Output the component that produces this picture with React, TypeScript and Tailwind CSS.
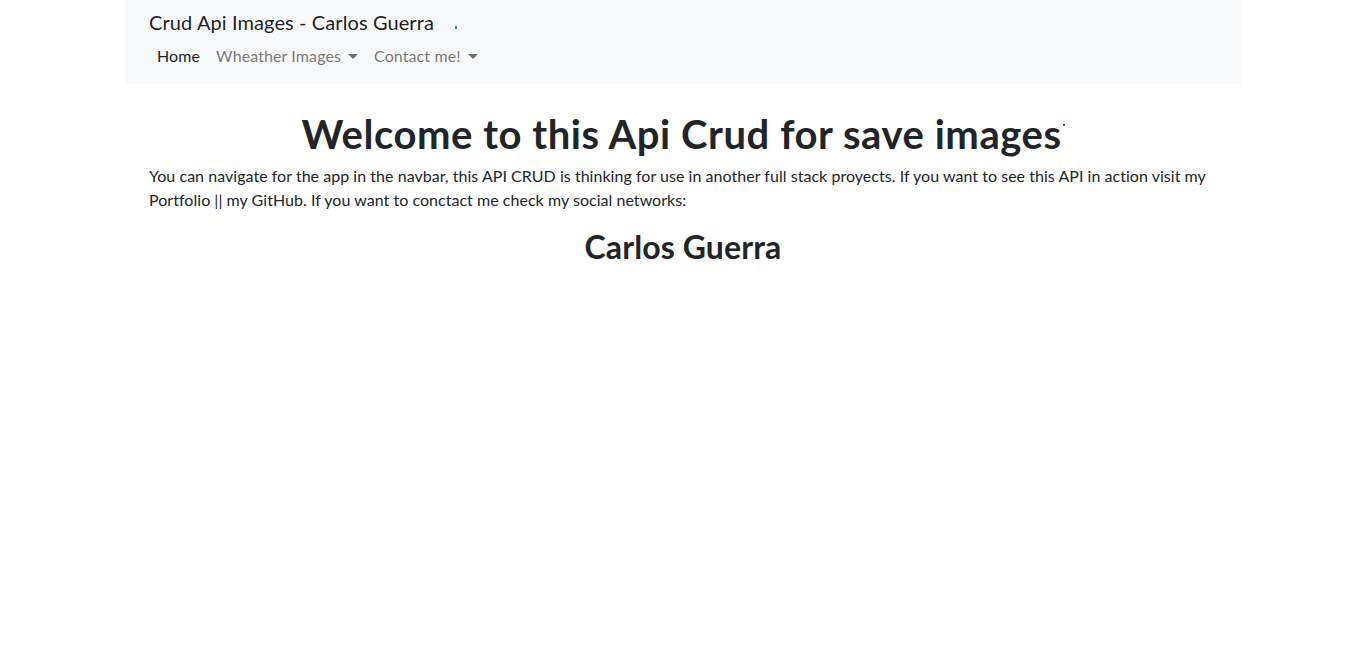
import React from "react";

export default function App() {
  return (
    <div className="min-h-screen bg-white text-[#212529]" style={{ fontFamily: "Lato, 'Noto Sans', sans-serif" }}>
      <div className="mx-auto w-[1116px]">
        <nav className="bg-[#f8f9fa] px-6 pb-2">
          <div className="flex items-start pt-[7px] h-[36px]">
            <span className="text-[20px] leading-[30px] tracking-[0.1px] text-[rgba(0,0,0,0.9)]">Crud Api Images - Carlos Guerra</span>
            <span className="ml-[21px] mt-[19px] w-[2px] h-[3px] bg-[#3b7fd0]"></span>
          </div>
          <ul className="flex h-[40px] items-center text-[16px] leading-6 tracking-[0.1px]">
            <li className="px-2 py-2 text-[rgba(0,0,0,0.9)]">Home</li>
            <li className="px-2 py-2 text-[rgba(0,0,0,0.55)] flex items-center">
              Wheather Images
              <span className="ml-[7px] inline-block w-0 h-0 border-l-[5px] border-r-[5px] border-t-[5px] border-l-transparent border-r-transparent border-t-[rgba(0,0,0,0.55)]"></span>
            </li>
            <li className="px-2 py-2 text-[rgba(0,0,0,0.55)] flex items-center">
              Contact me!
              <span className="ml-[7px] inline-block w-0 h-0 border-l-[5px] border-r-[5px] border-t-[5px] border-l-transparent border-r-transparent border-t-[rgba(0,0,0,0.55)]"></span>
            </li>
          </ul>
        </nav>
        <main className="px-6">
          <h1 className="mt-[26px] text-center text-[40px] font-bold leading-[48px] tracking-[0.55px]">
            Welcome to this Api Crud for save images
            <span className="inline-block align-top ml-[1px] mt-[14px] w-[2px] h-[2px] bg-[#8b2a2a]"></span>
          </h1>
          <p className="mt-[6px] text-[16px] leading-6 tracking-[0.035px]">
            You can navigate for the app in the navbar, this API CRUD is thinking for use in another full stack proyects. If you want to see this API in action visit my Portfolio || my GitHub. If you want to conctact me check my social networks:
          </p>
          <h2 className="mt-[16px] text-center text-[32px] font-bold leading-[38px] tracking-[0.1px]">Carlos Guerra</h2>
        </main>
      </div>
    </div>
  );
}
